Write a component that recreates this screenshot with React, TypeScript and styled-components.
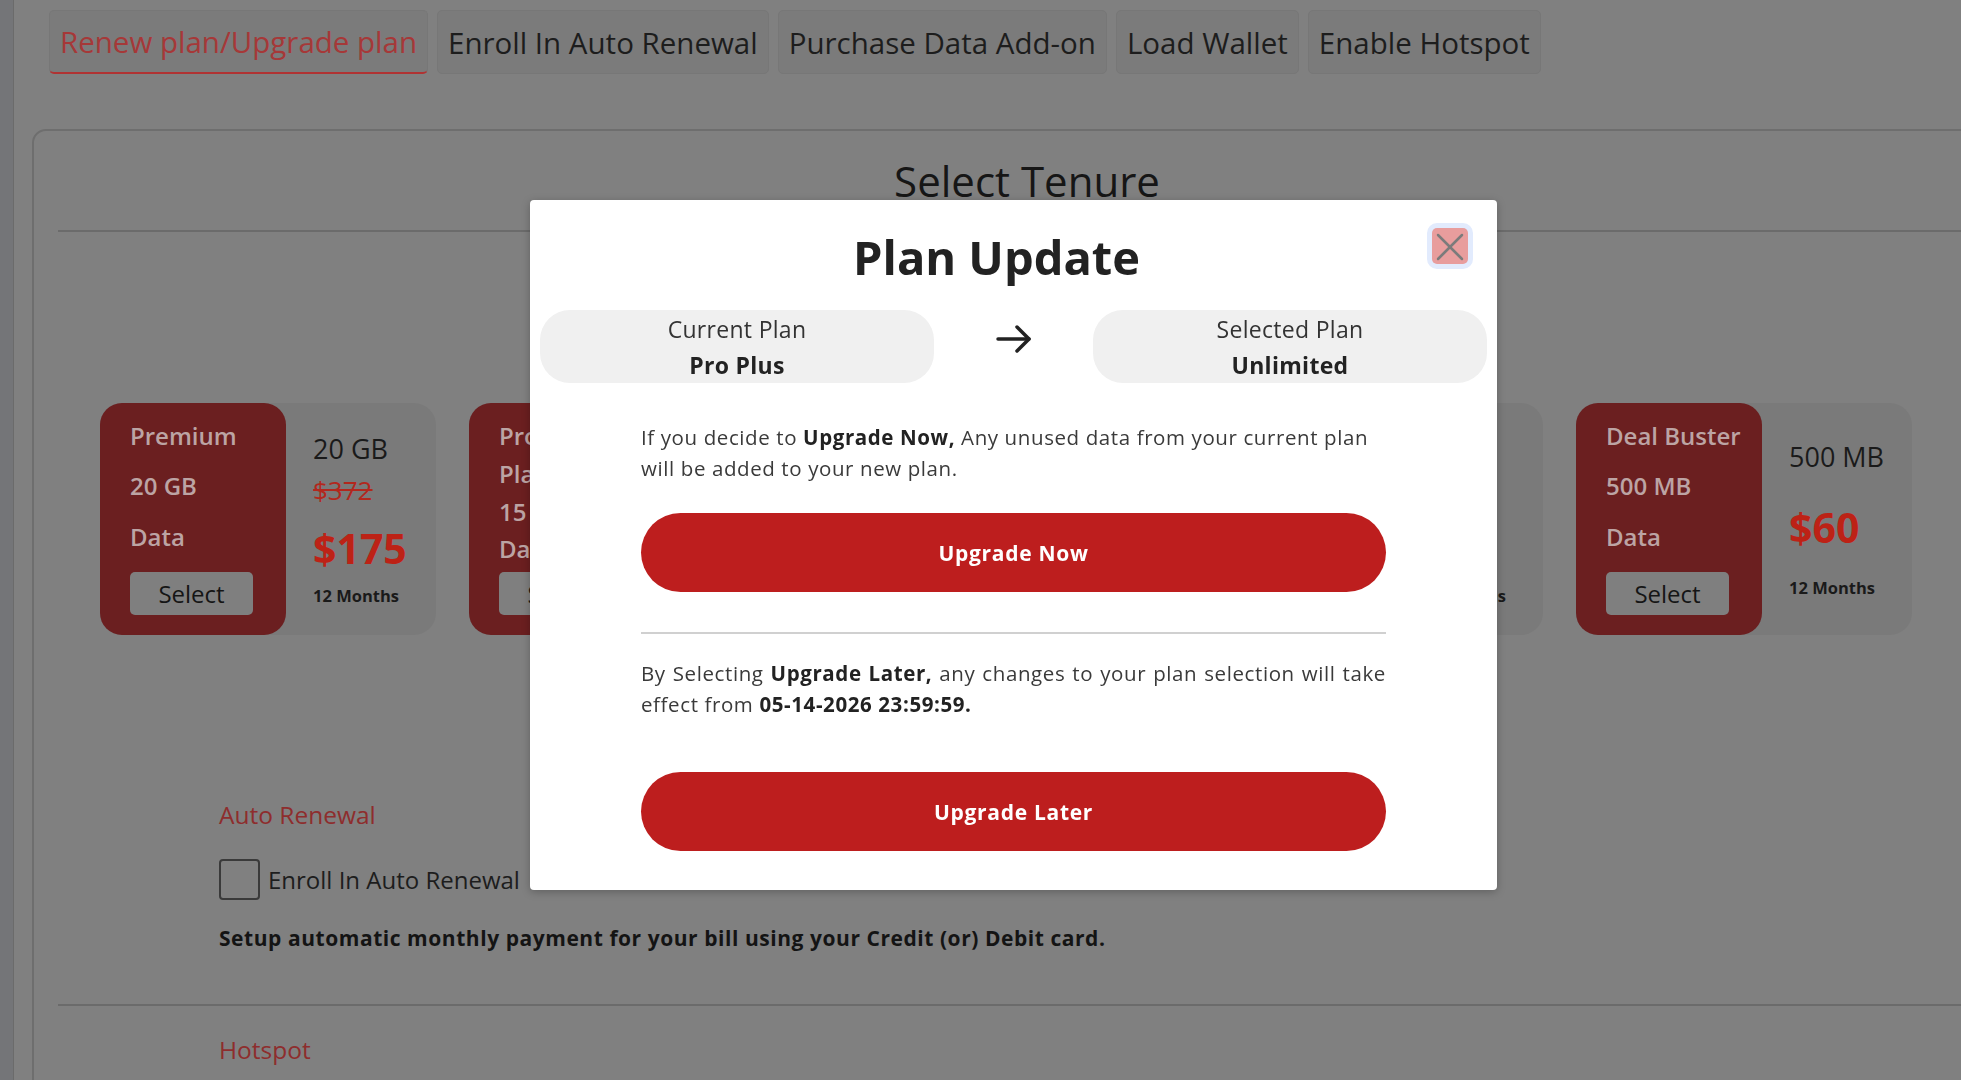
import React from 'react';
import styled, { createGlobalStyle } from 'styled-components';

interface Plan {
  id: number;
  lines: string[];
  size: string;
  oldPrice?: string;
  price: string;
}

const plans: Plan[] = [
  { id: 1, lines: ['Premium', '20 GB', 'Data'], size: '20 GB', oldPrice: '$372', price: '$175' },
  { id: 2, lines: ['Promo', 'Plan', '15 GB', 'Data'], size: '15 GB', oldPrice: '$300', price: '$150' },
  { id: 3, lines: ['Pro Plus', '10 GB', 'Data'], size: '10 GB', oldPrice: '$250', price: '$120' },
  { id: 4, lines: ['Basic', '5 GB', 'Data'], size: '5 GB', oldPrice: '$180', price: '$90' },
  { id: 5, lines: ['Deal Buster', '500 MB', 'Data'], size: '500 MB', price: '$60' },
];

const tabs = [
  'Renew plan/Upgrade plan',
  'Enroll In Auto Renewal',
  'Purchase Data Add-on',
  'Load Wallet',
  'Enable Hotspot',
];

const GlobalStyle = createGlobalStyle`
  html, body {
    margin: 0;
    padding: 0;
    overflow: hidden;
    background: #808080;
    font-family: "Open Sans", "Noto Sans", sans-serif;
  }
  * { box-sizing: border-box; }
`;

const Page = styled.div`
  display: flex;
  min-height: 100vh;
`;

const Strip = styled.div`
  width: 14px;
  flex-shrink: 0;
  background: #747578;
  border-right: 1px solid #6b6b6b;
`;

const Main = styled.div`
  flex: 1;
  padding: 10px 0 0 18px;
`;

const TabBar = styled.div`
  display: flex;
  gap: 9px;
  margin-left: 17px;
`;

const Tab = styled.button<{ $active?: boolean }>`
  height: 64px;
  padding: 0 10px;
  display: flex;
  align-items: center;
  background: #7b7b7b;
  border: 1px solid #777777;
  border-bottom: ${(p) => (p.$active ? '2px solid #b03333' : '1px solid #777777')};
  border-radius: 5px;
  font-family: inherit;
  font-size: 29.5px;
  color: ${(p) => (p.$active ? '#a63838' : '#1d1d1d')};
  white-space: nowrap;
`;

const Panel = styled.div`
  width: 1990px;
  margin-top: 55px;
  padding: 0 24px 40px;
  border: 2px solid #6e6e6e;
  border-radius: 14px;
`;

const Heading = styled.h2`
  margin: 22px 0 0;
  font-size: 42px;
  line-height: 56px;
  font-weight: 400;
  text-align: center;
  color: #161616;
`;

const Rule = styled.div<{ $top: number }>`
  height: 2px;
  margin-top: ${(p) => p.$top}px;
  background: #6b6b6b;
`;

const CardRow = styled.div`
  display: flex;
  gap: 33px;
  margin: 171px 0 0 42px;
`;

const Card = styled.div`
  display: flex;
  width: 336px;
  height: 232px;
  background: #7a7a7a;
  border-radius: 22px;
`;

const CardSide = styled.div`
  width: 186px;
  flex-shrink: 0;
  display: flex;
  flex-direction: column;
  justify-content: space-between;
  align-items: flex-start;
  padding: 18px 0 20px 30px;
  background: #6b1f20;
  border-radius: 22px;
`;

const SideLine = styled.div`
  font-size: 24px;
  line-height: 30px;
  font-weight: 600;
  color: #bca4a4;
  white-space: nowrap;
`;

const SelectButton = styled.button`
  width: 123px;
  height: 43px;
  border: none;
  border-radius: 5px;
  background: #7f7f7f;
  font-family: inherit;
  font-size: 24px;
  color: #151515;
`;

const CardInfo = styled.div`
  display: flex;
  flex-direction: column;
  justify-content: center;
  padding-left: 27px;
`;

const Size = styled.div`
  font-size: 27px;
  line-height: 32px;
  color: #1a1a1a;
  white-space: nowrap;
`;

const OldPrice = styled.div`
  margin-top: 10px;
  font-size: 26px;
  line-height: 31px;
  color: #b3271d;
  text-decoration: line-through;
`;

const Price = styled.div<{ $loose: boolean }>`
  margin-top: ${(p) => (p.$loose ? 30 : 18)}px;
  font-size: 41px;
  line-height: 49px;
  font-weight: 700;
  color: #bd2216;
`;

const Months = styled.div<{ $loose: boolean }>`
  margin-top: ${(p) => (p.$loose ? 26 : 13)}px;
  font-size: 16.5px;
  line-height: 20px;
  font-weight: 700;
  color: #1a1a1a;
  white-space: nowrap;
`;

const Section = styled.div<{ $top: number }>`
  margin-top: ${(p) => p.$top}px;
  padding-left: 161px;
`;

const SectionLabel = styled.div`
  font-size: 24.5px;
  line-height: 32px;
  color: #8e2d2d;
`;

const CheckRow = styled.label`
  display: flex;
  align-items: center;
  gap: 8px;
  margin-top: 28px;
`;

const CheckBox = styled.span`
  width: 41px;
  height: 41px;
  border: 2px solid #3a3a3a;
  border-radius: 4px;
`;

const CheckText = styled.span`
  font-size: 24px;
  color: #1d1d1d;
`;

const Note = styled.p`
  margin: 24px 0 0;
  font-size: 21px;
  letter-spacing: 0.55px;
  line-height: 28px;
  font-weight: 700;
  color: #141414;
`;

const Backdrop = styled.div`
  position: fixed;
  inset: 0;
  display: flex;
  justify-content: center;
  align-items: flex-start;
  padding: 200px 0 0 66px;
`;

const Modal = styled.div`
  width: 967px;
  padding-bottom: 39px;
  background: #ffffff;
  border-radius: 4px;
  box-shadow: 0 2px 8px rgba(0, 0, 0, 0.25);
`;

const ModalHeader = styled.div`
  display: flex;
  align-items: flex-start;
  padding: 28px 29px 0 31px;
`;

const ModalTitle = styled.h1`
  flex: 1;
  margin: 0;
  font-size: 47px;
  line-height: 58px;
  font-weight: 700;
  text-align: center;
  color: #222222;
`;

const CloseButton = styled.button`
  width: 36px;
  height: 36px;
  padding: 0;
  display: flex;
  align-items: center;
  justify-content: center;
  border: none;
  border-radius: 5px;
  background: #e89d9d;
  box-shadow: 0 0 0 5px #e2ebfd;
`;

const PlanRow = styled.div`
  display: flex;
  align-items: center;
  justify-content: space-between;
  margin: 24px 10px 0;
`;

const PlanBox = styled.div`
  width: 394px;
  height: 73px;
  display: flex;
  flex-direction: column;
  align-items: center;
  justify-content: center;
  background: #f0f0f0;
  border-radius: 30px;
  font-size: 23px;
  letter-spacing: 0.3px;
  line-height: 36px;
  color: #333333;
`;

const PlanName = styled.div`
  font-weight: 700;
  color: #222222;
`;

const Arrow = styled.svg`
  margin-bottom: 16px;
`;

const ModalBody = styled.div`
  width: 745px;
  margin: 39px auto 0;
`;

const Para = styled.p<{ $justify?: boolean }>`
  margin: 0;
  font-size: 20.5px;
  letter-spacing: 0.6px;
  line-height: 31px;
  color: #3a3a3a;
  text-align: ${(p) => (p.$justify ? 'justify' : 'left')};

  b {
    color: #222222;
  }
`;

const PrimaryButton = styled.button<{ $top: number }>`
  display: block;
  width: 100%;
  height: 79px;
  margin-top: ${(p) => p.$top}px;
  border: none;
  border-radius: 40px;
  background: #bd1e1e;
  font-family: inherit;
  font-size: 21px;
  letter-spacing: 0.7px;
  font-weight: 700;
  color: #ffffff;
`;

const Divider = styled.div`
  height: 2px;
  margin: 40px 0 24px;
  background: #d0d0d0;
`;

const ArrowIcon = () => (
  <Arrow width="36" height="30" viewBox="0 0 36 30" fill="none" stroke="#222" strokeWidth="3.5" strokeLinecap="round" strokeLinejoin="round">
    <line x1="2" y1="15" x2="33" y2="15" />
    <polyline points="21,3 33,15 21,27" />
  </Arrow>
);

const CloseIcon = () => (
  <svg width="36" height="36" viewBox="0 0 36 36" stroke="#7b7b7b" strokeWidth="2.5" strokeLinecap="round">
    <line x1="6" y1="7" x2="30" y2="31" />
    <line x1="30" y1="7" x2="6" y2="31" />
  </svg>
);

const PlanCard: React.FC<{ plan: Plan }> = ({ plan }) => {
  const loose = !plan.oldPrice;
  return (
    <Card>
      <CardSide>
        {plan.lines.map((line, i) => (
          <SideLine key={i}>{line}</SideLine>
        ))}
        <SelectButton>Select</SelectButton>
      </CardSide>
      <CardInfo>
        <Size>{plan.size}</Size>
        {plan.oldPrice && <OldPrice>{plan.oldPrice}</OldPrice>}
        <Price $loose={loose}>{plan.price}</Price>
        <Months $loose={loose}>12 Months</Months>
      </CardInfo>
    </Card>
  );
};

const App: React.FC = () => {
  return (
    <>
      <GlobalStyle />
      <Page>
        <Strip />
        <Main>
          <TabBar>
            {tabs.map((t, i) => (
              <Tab key={t} $active={i === 0}>
                {t}
              </Tab>
            ))}
          </TabBar>
          <Panel>
            <Heading>Select Tenure</Heading>
            <Rule $top={21} />
            <CardRow>
              {plans.map((p) => (
                <PlanCard key={p.id} plan={p} />
              ))}
            </CardRow>
            <Section $top={164}>
              <SectionLabel>Auto Renewal</SectionLabel>
              <CheckRow>
                <CheckBox />
                <CheckText>Enroll In Auto Renewal</CheckText>
              </CheckRow>
              <Note>Setup automatic monthly payment for your bill using your Credit (or) Debit card.</Note>
            </Section>
            <Rule $top={52} />
            <Section $top={28}>
              <SectionLabel>Hotspot</SectionLabel>
            </Section>
          </Panel>
        </Main>
      </Page>
      <Backdrop>
        <Modal>
          <ModalHeader>
            <ModalTitle>Plan Update</ModalTitle>
            <CloseButton aria-label="Close">
              <CloseIcon />
            </CloseButton>
          </ModalHeader>
          <PlanRow>
            <PlanBox>
              <div>Current Plan</div>
              <PlanName>Pro Plus</PlanName>
            </PlanBox>
            <ArrowIcon />
            <PlanBox>
              <div>Selected Plan</div>
              <PlanName>Unlimited</PlanName>
            </PlanBox>
          </PlanRow>
          <ModalBody>
            <Para>
              If you decide to <b>Upgrade Now,</b> Any unused data from your current plan will be added to your new plan.
            </Para>
            <PrimaryButton $top={29}>Upgrade Now</PrimaryButton>
            <Divider />
            <Para $justify>
              By Selecting <b>Upgrade Later,</b> any changes to your plan selection will take effect from{' '}
              <b>05-14-2026 23:59:59.</b>
            </Para>
            <PrimaryButton $top={52}>Upgrade Later</PrimaryButton>
          </ModalBody>
        </Modal>
      </Backdrop>
    </>
  );
};

export default App;
